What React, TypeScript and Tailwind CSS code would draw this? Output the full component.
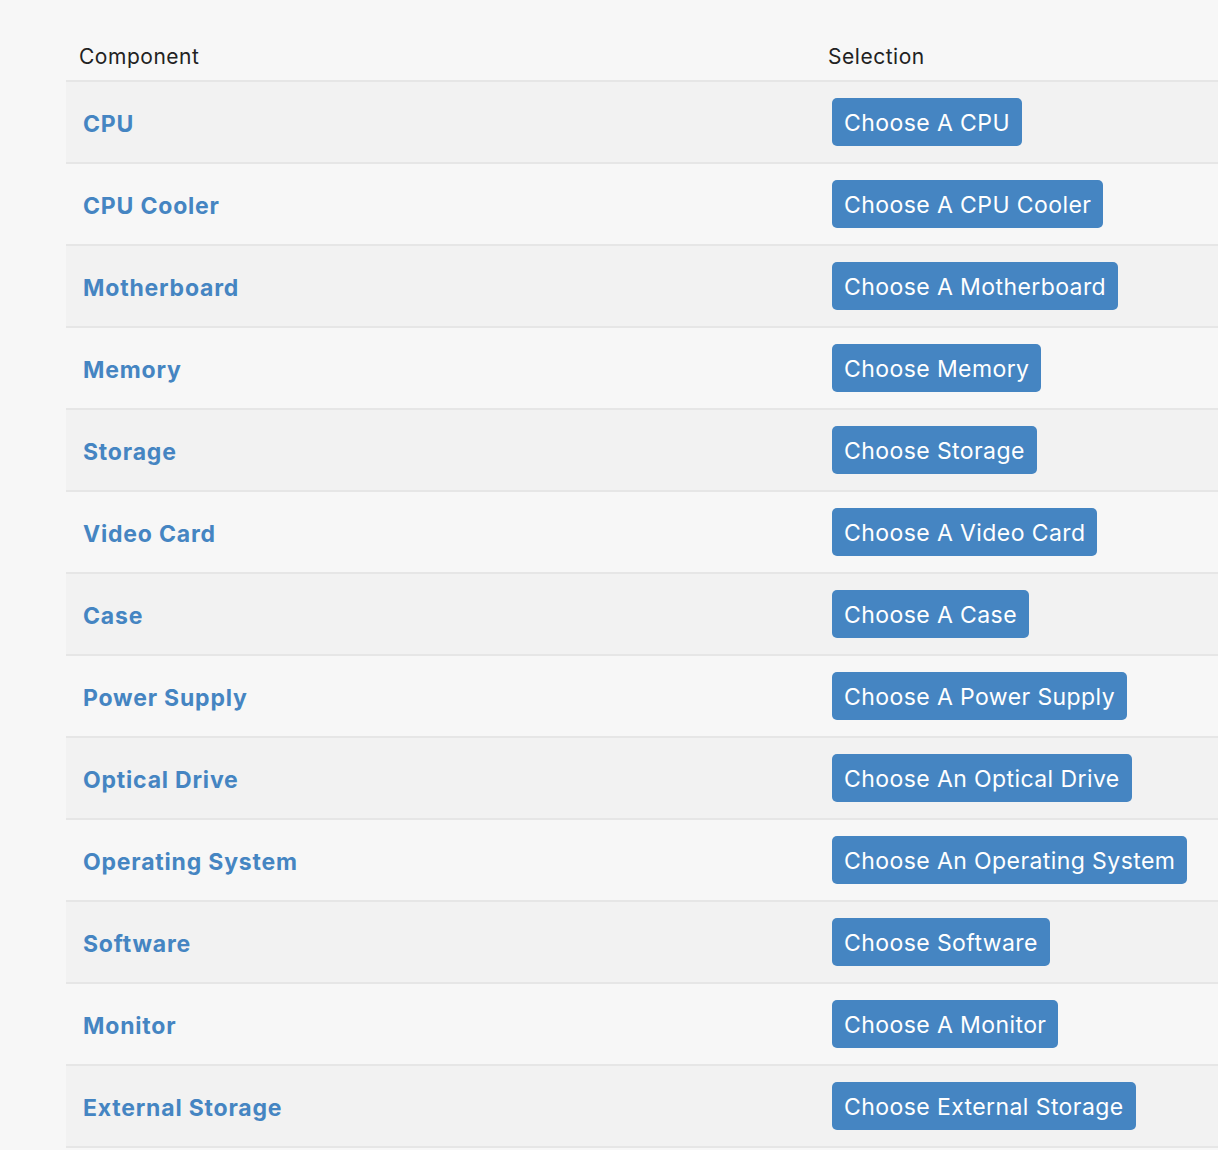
const parts = [
  { name: "CPU", action: "Choose A CPU" },
  { name: "CPU Cooler", action: "Choose A CPU Cooler" },
  { name: "Motherboard", action: "Choose A Motherboard" },
  { name: "Memory", action: "Choose Memory" },
  { name: "Storage", action: "Choose Storage" },
  { name: "Video Card", action: "Choose A Video Card" },
  { name: "Case", action: "Choose A Case" },
  { name: "Power Supply", action: "Choose A Power Supply" },
  { name: "Optical Drive", action: "Choose An Optical Drive" },
  { name: "Operating System", action: "Choose An Operating System" },
  { name: "Software", action: "Choose Software" },
  { name: "Monitor", action: "Choose A Monitor" },
  { name: "External Storage", action: "Choose External Storage" },
];

const App = () => {
  return (
    <div
      className="min-h-[1150px] w-full overflow-hidden bg-[#f7f7f7] pl-[66px]"
      style={{ fontFamily: "Inter, 'Noto Sans', sans-serif" }}
    >
      <div className="w-[1300px]">
        <div className="flex h-[82px] items-end border-b-2 border-[#e6e6e6] pb-[11px] text-[21px] leading-[24px] tracking-[0.025em] text-[#222]">
          <div className="w-[762px] pl-[13px]">Component</div>
          <div>Selection</div>
        </div>
        {parts.map((p, i) => (
          <div
            key={p.name}
            className={
              "flex h-[82px] items-center border-b-2 border-[#e6e6e6] " +
              (i % 2 === 0 ? "bg-[#f2f2f2]" : "bg-[#f7f7f7]")
            }
          >
            <div className="w-[762px] pl-[17px] pt-[4px]">
              <a
                href="#"
                className="text-[23px] font-bold leading-[28px] tracking-[0.035em] text-[#4585c2]"
              >
                {p.name}
              </a>
            </div>
            <div className="pl-[4px]">
              <button
                type="button"
                className="flex h-[48px] items-center rounded-[5px] bg-[#4585c2] px-[12px] pt-[2px] text-[23px] leading-[28px] tracking-[0.018em] text-white"
              >
                {p.action}
              </button>
            </div>
          </div>
        ))}
      </div>
    </div>
  );
};

export default App;
